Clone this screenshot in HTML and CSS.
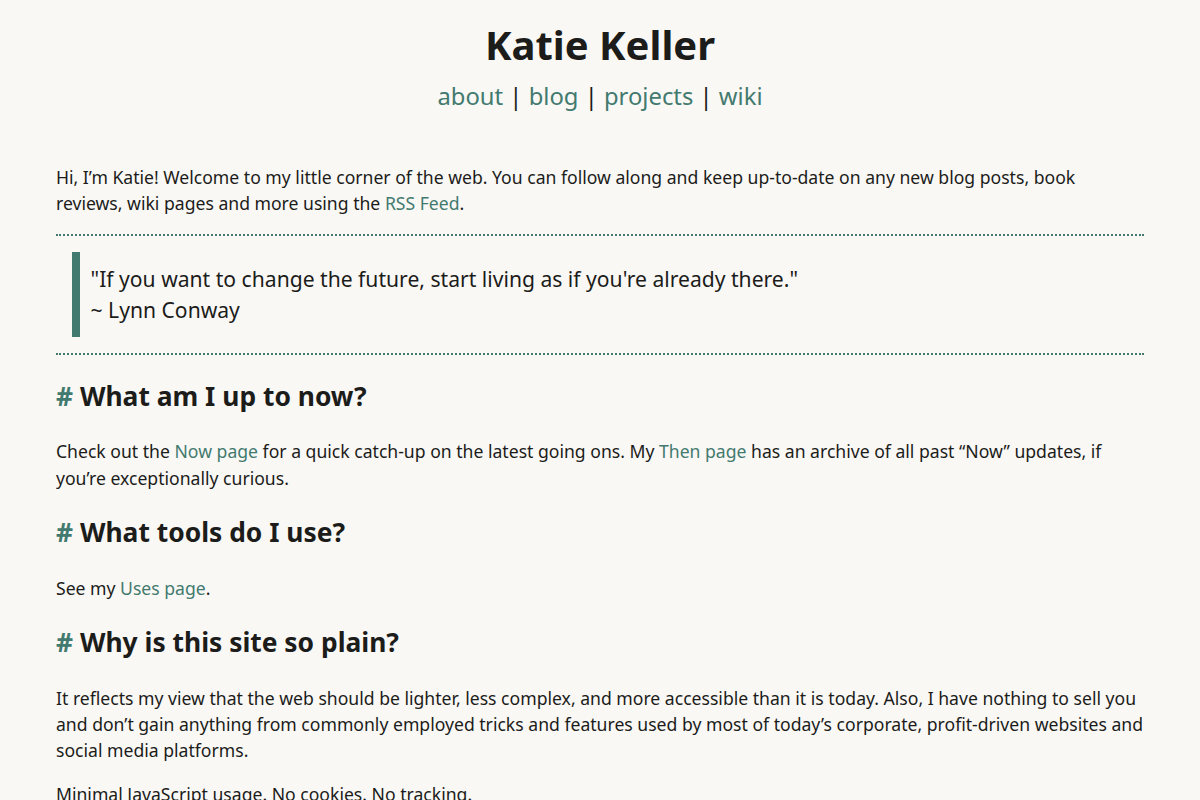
FILE: index.html
```
<!DOCTYPE html>
<html lang="en">

<head>
    <meta charset="UTF-8">
    <meta name="viewport" content="width=device-width, initial-scale=1.0">
    <title>Katie Keller</title>
    <link rel="stylesheet" href="styles.css">
</head>

<body>
    <header>
        <h1>Katie Keller</h1>
        <nav>
            <a href="#">about</a> | <a href="#">blog</a> | <a href="#">projects</a> | <a href="#">wiki</a>
        </nav>
    </header>

    <main>
        <p>Hi, I’m Katie! Welcome to my little corner of the web. You can follow along and keep up-to-date on any new blog posts, book reviews, wiki pages and more using the <a href="#">RSS Feed</a>.</p>

        <hr>

        <blockquote>
            <p>"If you want to change the future, start living as if you're already there."<br>~ Lynn Conway</p>
        </blockquote>

        <hr>

        <h2><span class="hash">#</span> What am I up to now?</h2>
        <p>Check out the <a href="#">Now page</a> for a quick catch-up on the latest going ons. My <a href="#">Then page</a> has an archive of all past “Now” updates, if you’re exceptionally curious.</p>

        <h2><span class="hash">#</span> What tools do I use?</h2>
        <p>See my <a href="#">Uses page</a>.</p>

        <h2><span class="hash">#</span> Why is this site so plain?</h2>
        <p>It reflects my view that the web should be lighter, less complex, and more accessible than it is today. Also, I have nothing to sell you and don’t gain anything from commonly employed tricks and features used by most of today’s corporate, profit-driven websites and social media platforms.</p>
        <p>Minimal JavaScript usage. No cookies. No tracking.</p>
    </main>
</body>

</html>
```

FILE: styles.css
```
* {
    margin: 0;
    padding: 0;
    box-sizing: border-box;
}

:root {
    --accent: #437a6f;
    --text: #1c1c1a;
    --bg: #f9f8f5;
}

body {
    background-color: var(--bg);
    color: var(--text);
    font-family: "Noto Sans", "Open Sans", sans-serif;
    font-size: 17.6px;
    line-height: 1.5;
}

a {
    color: var(--accent);
    text-decoration: none;
}

header {
    text-align: center;
    padding-top: 21px;
}

h1 {
    font-size: 40px;
    line-height: 1.2;
}

nav {
    font-size: 23.8px;
    margin-top: 10px;
}

main {
    max-width: 1088px;
    margin: 49px auto 0;
}

main p {
    margin-bottom: 1em;
}

hr {
    border: none;
    border-top: 2px dotted var(--accent);
    margin: 0;
}

blockquote {
    margin: 16px;
    border-left: 8px solid var(--accent);
    padding: 0.5em;
    font-size: 1.2em;
}

blockquote p {
    margin: 0;
}

h2 {
    font-size: 1.5em;
    line-height: 1.35;
    margin: 24px 0;
}

.hash {
    color: var(--accent);
}
```
